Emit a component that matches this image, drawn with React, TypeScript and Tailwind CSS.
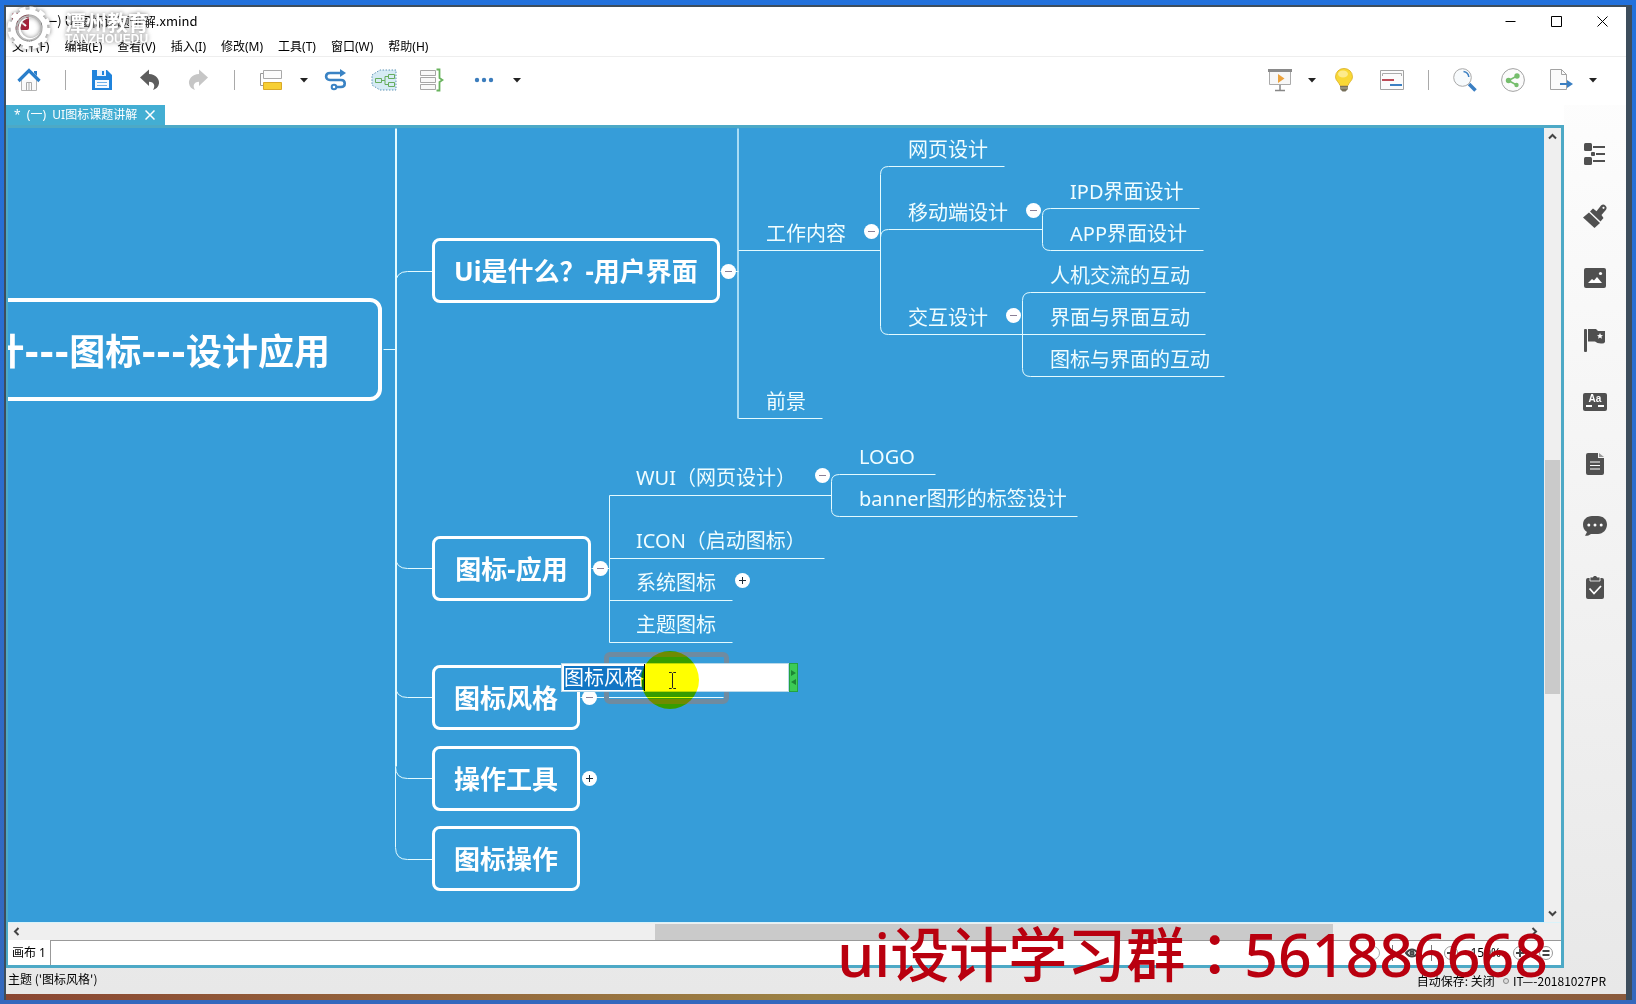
import { useEffect, useRef, type ReactNode } from 'react';

const menus = ['文件(F)', '编辑(E)', '查看(V)', '插入(I)', '修改(M)', '工具(T)', '窗口(W)', '帮助(H)'];

const mainTopics = [
  { text: 'Ui是什么？-用户界面', pos: 'left-[424px] top-[110px] w-72' },
  { text: '图标-应用', pos: 'left-[424px] top-[408px] w-[159px]' },
  { text: '图标风格', pos: 'left-[424px] top-[537px] w-37' },
  { text: '操作工具', pos: 'left-[424px] top-[618px] w-37' },
  { text: '图标操作', pos: 'left-[424px] top-[698px] w-37' },
];

const subTopics = [
  { text: '网页设计', pos: 'left-[900px] top-[8px]' },
  { text: '移动端设计', pos: 'left-[900px] top-[71px]' },
  { text: '工作内容', pos: 'left-[758px] top-[92px]' },
  { text: '前景', pos: 'left-[758px] top-[260px]' },
  { text: '交互设计', pos: 'left-[900px] top-[176px]' },
  { text: 'IPD界面设计', pos: 'left-[1062px] top-[50px]' },
  { text: 'APP界面设计', pos: 'left-[1062px] top-[92px]' },
  { text: '人机交流的互动', pos: 'left-[1042px] top-[134px]' },
  { text: '界面与界面互动', pos: 'left-[1042px] top-[176px]' },
  { text: '图标与界面的互动', pos: 'left-[1042px] top-[218px]' },
  { text: 'WUI（网页设计）', pos: 'left-[628px] top-[336px]' },
  { text: 'ICON（启动图标）', pos: 'left-[628px] top-[399px]' },
  { text: '系统图标', pos: 'left-[628px] top-[441px]' },
  { text: '主题图标', pos: 'left-[628px] top-[483px]' },
  { text: 'LOGO', pos: 'left-[851px] top-[315px]' },
  { text: 'banner图形的标签设计', pos: 'left-[851px] top-[357px]' },
];

const toggles = [
  { open: true, pos: 'left-[713px] top-[136px]' },
  { open: true, pos: 'left-[856px] top-[96px]' },
  { open: true, pos: 'left-[1018px] top-[75px]' },
  { open: true, pos: 'left-[998px] top-[180px]' },
  { open: true, pos: 'left-[585px] top-[433px]' },
  { open: true, pos: 'left-[807px] top-[340px]' },
  { open: false, pos: 'left-[727px] top-[445px]' },
  { open: true, pos: 'left-[574px] top-[562px]' },
  { open: false, pos: 'left-[574px] top-[643px]' },
];

function ToolButton({ label, wide, children }: { label: string; wide?: boolean; children: ReactNode }) {
  return (
    <button aria-label={label} className={`flex h-6 shrink-0 items-center justify-center ${wide ? 'w-8' : 'w-6'}`}>
      {children}
    </button>
  );
}

function Caret({ label }: { label: string }) {
  return (
    <button aria-label={label} className="flex h-6 w-2 items-center justify-center">
      <svg width="8" height="5" viewBox="0 0 8 5">
        <path d="M0 0h8L4 4.6z" fill="#222" />
      </svg>
    </button>
  );
}

function Separator() {
  return <div className="h-5 w-px bg-[#a9a9a9]" />;
}

function Toolbar() {
  return (
    <div className="flex h-12 items-center justify-between pr-[29px] pb-0.5 pl-[11px]">
      <div className="flex items-center gap-6">
        <ToolButton label="主页">
          <svg width="24" height="24" viewBox="0 0 24 24" fill="none">
            <path d="M4.500 12v10.500h15V12" fill="#fafafa" stroke="#b5b5b5" />
            <path d="M9.500 22.500v-8h5v8M12 14.500v8" stroke="#aaa" />
            <path d="M17 3h3v5l-3-3z" fill="#2b7fcb" />
            <path d="M1.500 13 12 2.500 22.500 13" stroke="#2b7fcb" strokeWidth="3.200" />
          </svg>
        </ToolButton>
        <Separator />
        <ToolButton label="保存">
          <svg width="22" height="22" viewBox="0 0 22 22">
            <path d="M1 1h15l5 5v15H1z" fill="#1f83dc" />
            <path d="M6 1h9v6H6z" fill="#eaf4fd" />
            <path d="M11 2h2v4h-2z" fill="#1f83dc" />
            <path d="M4 11h14v8H4z" fill="#f5faff" />
            <path d="M6 13.500h10M6 16.500h10" stroke="#6fb1ea" />
          </svg>
        </ToolButton>
        <ToolButton label="撤销">
          <svg width="20" height="22" viewBox="0 0 20 22">
            <path d="M0 8.500 9 .5v4.500c7 .5 10.500 5 10 9.500-.4 3.500-3 5.500-6 6.500 2.500-4 1.500-8-4-8.300V17z" fill="#5d5d5d" />
          </svg>
        </ToolButton>
        <ToolButton label="重做">
          <svg width="20" height="22" viewBox="0 0 20 22">
            <path d="m20 8.500-9-8V5C4 5.500.5 10 1 14.500c.4 3.500 3 5.500 6 6.500-2.500-4-1.500-8 4-8.300V17z" fill="#c6c6c6" />
          </svg>
        </ToolButton>
        <Separator />
        <div className="-mr-2 flex items-center gap-[17px]">
          <ToolButton label="主题">
            <svg width="24" height="24" viewBox="0 0 24 24" fill="none">
              <path d="M5 5.500H1.500v12H4" stroke="#999" />
              <path d="M4.500 2.500h18v8h-18z" fill="#fcfcfc" stroke="#a9a9a9" />
              <path d="M4.500 14.500h18v7h-18z" fill="#f7cf34" stroke="#d9a928" />
            </svg>
          </ToolButton>
          <Caret label="主题选项" />
        </div>
        <ToolButton label="联系">
          <svg width="24" height="24" viewBox="0 0 24 24" fill="none" stroke="#3a83c4">
            <path d="M17 5H6C.8 5 .8 12 6 12h11c5 0 5 7 0 7h-4" strokeWidth="2.600" />
            <path d="M16 1v8l6-4z" fill="#3a83c4" stroke="none" />
            <circle cx="10" cy="19" r="2.300" fill="#fff" strokeWidth="2" />
          </svg>
        </ToolButton>
        <ToolButton label="外框">
          <svg width="26" height="22" viewBox="0 0 26 22" fill="none" className="shrink-0">
            <path d="M1 6 9 1h16v20H9l-8-5z" fill="#d6ebf5" stroke="#5f94b5" strokeDasharray="1.500 1.500" />
            <path d="M4.500 9.500h6v4h-6zM17.500 5.500h6v4h-6zM17.500 13.500h6v4h-6zM10.500 11.500H14v-4h3.500M14 11.500v4h3.500" stroke="#67ad5d" />
          </svg>
        </ToolButton>
        <ToolButton label="概要">
          <svg width="24" height="24" viewBox="0 0 24 24" fill="none">
            <path d="M.5 2.500h15v5H.5zM.5 9.500h15v5H.5zM.5 16.500h15v5H.5z" fill="#f8f8f8" stroke="#a6a6a6" />
            <path d="M16.500 1.500h3V10l3 2-3 2v8.500h-3" stroke="#69b35e" strokeWidth="1.800" />
          </svg>
        </ToolButton>
        <div className="flex items-center gap-[13px]">
          <ToolButton label="更多" wide>
            <svg width="20" height="6" viewBox="0 0 20 6" fill="#3c7dbd">
              <circle cx="3" cy="3" r="2.200" />
              <circle cx="10" cy="3" r="2.200" />
              <circle cx="17" cy="3" r="2.200" />
            </svg>
          </ToolButton>
          <Caret label="更多选项" />
        </div>
      </div>

      <div className="flex items-center gap-6">
        <div className="-mr-2 flex items-center gap-4">
          <ToolButton label="演示">
            <svg width="24" height="24" viewBox="0 0 24 24" fill="none">
              <path d="M1.500 3h21v13.500h-21z" fill="#f7f7f7" stroke="#aaa" />
              <path d="M0 1h24v3H0z" fill="#8a8a8a" />
              <path d="M10 6v9l6.500-4.500z" fill="#eba23c" />
              <path d="M12 17v5M7 22.500h10" stroke="#888" strokeWidth="1.500" />
            </svg>
          </ToolButton>
          <Caret label="演示选项" />
        </div>
        <ToolButton label="头脑风暴">
          <svg width="20" height="24" viewBox="0 0 20 24">
            <path d="M10 .5a8.300 8.300 0 0 0-8.500 8.300c0 4 3.500 5.200 4.500 8.700h8c1-3.500 4.500-4.700 4.500-8.700A8.300 8.300 0 0 0 10 .5z" fill="#f9d835" stroke="#d9ad25" strokeWidth=".8" />
            <ellipse cx="9" cy="6" rx="5" ry="3.500" fill="#fdeb8b" />
            <path d="M6 18h8v3l-2.500 2.500h-3L6 21z" fill="#77705a" />
            <path d="M6 20h8" stroke="#c9c3ae" strokeWidth=".8" />
          </svg>
        </ToolButton>
        <ToolButton label="甘特图">
          <svg width="24" height="22" viewBox="0 0 24 22" fill="none">
            <path d="M.5 1.500h23v19H.5z" fill="#fbfbfb" stroke="#a2a2a2" />
            <path d="M2.500 7V4.500h19V7" stroke="#aaa" />
            <path d="M2 11h12" stroke="#bd4b57" strokeWidth="2" />
            <path d="M10 16h12" stroke="#3b7fc2" strokeWidth="2" />
          </svg>
        </ToolButton>
        <Separator />
        <ToolButton label="搜索">
          <svg width="24" height="24" viewBox="0 0 24 24" fill="none">
            <path d="m16 16 6.500 6.500" stroke="#3b7fc2" strokeWidth="3.500" />
            <circle cx="9.500" cy="9.500" r="8.800" fill="#f7fafc" stroke="#a9a9a9" />
            <path d="M10.500 3.500c3 .5 5 2.500 5.300 5.500" stroke="#3b7fc2" strokeWidth="1.500" />
          </svg>
        </ToolButton>
        <ToolButton label="分享">
          <svg width="24" height="24" viewBox="0 0 24 24" fill="none">
            <circle cx="12" cy="12" r="11.400" fill="#fbfbfb" stroke="#a3a3a3" />
            <path d="M16 8 7.500 12.500 15.500 17" stroke="#75bd6c" strokeWidth="1.600" />
            <circle cx="16" cy="8" r="2.700" fill="#75bd6c" />
            <circle cx="7.500" cy="12.500" r="2.700" fill="#75bd6c" />
            <circle cx="15.500" cy="17" r="2.200" fill="#75bd6c" />
          </svg>
        </ToolButton>
        <div className="flex items-center gap-4">
          <ToolButton label="导出">
            <svg width="24" height="24" viewBox="0 0 24 24" fill="none">
              <path d="M1.500 1.500h11l5 5v15h-16z" fill="#fbfbfb" stroke="#a3a3a3" />
              <path d="M12.500 1.500v5h5" stroke="#a3a3a3" />
              <path d="M11 16h8" stroke="#3b7fc2" strokeWidth="2" />
              <path d="M18 12v8l6-4z" fill="#3b7fc2" />
            </svg>
          </ToolButton>
          <Caret label="导出选项" />
        </div>
      </div>
    </div>
  );
}

function Sidebar() {
  return (
    <div className="flex flex-1 flex-col items-center gap-[38px] pt-[37px] text-[#505050]">
      <ToolButton label="大纲">
        <svg width="22" height="22" viewBox="0 0 22 22" fill="currentColor">
          <rect width="8" height="8" rx="1.500" />
          <rect y="14" width="8" height="8" rx="1.500" />
          <rect x="7" y="9" width="4" height="4" rx="1" />
          <path d="M9 3h12v2H9zM12 10h9v2h-9zM9 17h12v2H9z" />
        </svg>
      </ToolButton>
      <ToolButton label="格式">
        <svg width="24" height="24" viewBox="0 0 24 24" fill="currentColor">
          <path d="m0 13.500 6-5L17 19l-5.500 5z" />
          <path d="m7 7.500 3-3 3.500 2.700L18 1.500A3.300 3.300 0 0 1 23 5.700L18.500 11l2 3-3 3.500z" />
          <circle cx="20.500" cy="3.800" r="1.100" fill="#fbfbfb" />
        </svg>
      </ToolButton>
      <ToolButton label="图片">
        <svg width="22" height="20" viewBox="0 0 22 20">
          <rect width="22" height="20" rx="2" fill="currentColor" />
          <path d="m4 15 4-4 2 1.500L13 9l5 6z" fill="#fff" />
          <circle cx="16.500" cy="5.500" r="1.600" fill="#fff" />
        </svg>
      </ToolButton>
      <ToolButton label="图标">
        <svg width="22" height="24" viewBox="0 0 22 24" fill="currentColor">
          <rect x="0" y="1" width="3" height="23" rx="1" />
          <path d="M4 1h8l2 2h7v11q-1 2-4 1.500-4 0-6-2H4z" />
          <path d="m16 5 .9 2 2.100.2-1.600 1.400.5 2.100-1.900-1.100-1.900 1.100.5-2.100L13 7.200l2.100-.2z" fill="#fff" />
        </svg>
      </ToolButton>
      <ToolButton label="标签">
        <span className="flex h-[18px] w-6 shrink-0 flex-col items-center rounded-[2px] bg-[#505050] font-['Liberation_Sans'] text-[10px] leading-3 font-bold text-white">
          Aa
          <span className="w-[18px] border-t-2 border-dashed border-white" />
        </span>
      </ToolButton>
      <ToolButton label="备注">
        <svg width="20" height="22" viewBox="0 0 20 22">
          <path d="M3 0h10v5h6v15a2 2 0 0 1-2 2H3a2 2 0 0 1-2-2V2a2 2 0 0 1 2-2z" fill="currentColor" />
          <path d="M14 0v4h5z" fill="#999" />
          <path d="M5 9h10M5 12.500h10M5 16h10" stroke="#fff" strokeWidth="1.200" />
        </svg>
      </ToolButton>
      <ToolButton label="批注">
        <svg width="24" height="20" viewBox="0 0 24 20">
          <path d="M9 0h6c5 0 9 3.500 9 8.500S20 18 15 18H8c-2 1.500-4 2-6 1.800L4 16C1 14.500 0 11.500 0 8.500 0 3.500 4 0 9 0z" fill="currentColor" />
          <circle cx="5.800" cy="9" r="1.500" fill="#fff" />
          <circle cx="12" cy="9" r="1.500" fill="#fff" />
          <circle cx="18.200" cy="9" r="1.500" fill="#fff" />
        </svg>
      </ToolButton>
      <ToolButton label="任务信息">
        <svg width="20" height="24" viewBox="0 0 20 24">
          <rect x="1" y="2" width="18" height="21" rx="2" fill="currentColor" />
          <path d="M5 1h3a2 2 0 0 1 4 0h3v4H5z" fill="currentColor" stroke="#fff" strokeWidth=".8" />
          <path d="m4.500 12.500 4.500 5 7-7.500" fill="none" stroke="#fff" strokeWidth="1.800" />
        </svg>
      </ToolButton>
    </div>
  );
}

function Connectors() {
  return (
    <svg className="absolute inset-0 h-full w-full" fill="none" stroke="#e4fbff" strokeWidth="1">
      <g transform="translate(.5 .5)">
        {/* trunk */}
        <path d="M387.500 0V638" strokeWidth="2" />
        <path d="M387 638V719Q387 731 399 731H424M375 221H388" />
        <path d="M387 156Q387 143 399 143H424M387 428Q387 440 399 440H424M387 557Q387 569 399 569H424M387 638Q387 650 399 650H424" />
        <path d="M729.500 0V290" stroke="#a8dcf5" strokeWidth="2" />
        <path d="M712 143H730M730 122H872M730 290H814" />
        <path d="M996 38H880Q872 38 872 46V198Q872 206 880 206H1197M872 109Q872 101 880 101H1034" />
        <path d="M1191 80H1042Q1034 80 1034 87V115Q1034 122 1042 122H1195" />
        <path d="M1197 164H1022Q1014 164 1014 172V240Q1014 248 1022 248H1216" />
        <path d="M583 440H601M823 367H601V514H724M601 430H816M601 472H724" />
        <path d="M927 346H831Q823 346 823 353V381Q823 388 831 388H1069" />
        <path d="M572 569H715" />
      </g>
    </svg>
  );
}

function TopicEditor() {
  const ref = useRef<HTMLInputElement>(null);

  useEffect(() => {
    ref.current?.focus();
    ref.current?.select();
  }, []);

  return (
    <div className="absolute top-[535px] left-[553px] flex h-[29px]">
      <input
        ref={ref}
        aria-label="编辑主题"
        defaultValue="图标风格"
        className="w-57 border border-[#b9d9ea] bg-white pt-px pl-0.5 text-xl leading-6 text-black outline-none selection:bg-[#1175c4] selection:text-white"
      />
      <div className="flex w-[9px] flex-col items-center justify-center gap-1 border border-[#23a33f] bg-[#3ccb56]">
        <svg width="5" height="16" viewBox="0 0 5 16" fill="#1d8635">
          <path d="M0 0v6l5-3zM5 9v6l-5-3z" />
        </svg>
      </div>
      <span className="absolute top-px left-[83px] h-[27px] w-px bg-black" />
    </div>
  );
}

function Canvas() {
  return (
    <div className="relative min-w-0 flex-1 overflow-hidden bg-[#369dd9] text-[#f0fdff]">
      <Connectors />

      <div className="absolute top-[170px] left-[-500px] flex h-[103px] w-[874px] items-center justify-end rounded-xl border-4 border-white pt-1.5 pr-12 font-['DejaVu_Sans','Noto_Sans_CJK_SC',sans-serif] text-4xl font-bold whitespace-nowrap text-white">
        计---图标---设计应用
      </div>

      {mainTopics.map((topic) => (
        <div
          key={topic.text}
          className={`absolute flex h-[65px] items-center justify-center rounded-lg border-3 border-white pt-0.5 text-[26px] font-bold whitespace-nowrap text-white ${topic.pos}`}
        >
          {topic.text}
        </div>
      ))}

      {subTopics.map((topic) => (
        <div key={topic.text} className={`absolute text-xl leading-7 whitespace-nowrap ${topic.pos}`}>
          {topic.text}
        </div>
      ))}

      {toggles.map((toggle) => (
        <button
          key={toggle.pos}
          aria-label={toggle.open ? '收起' : '展开'}
          className={`absolute flex size-[15px] items-center justify-center rounded-full bg-white ${toggle.pos}`}
        >
          <svg width="9" height="9" viewBox="0 0 9 9" stroke={toggle.open ? '#8b7f96' : '#1c2c3a'}>
            <path d={toggle.open ? 'M1 4.500h7' : 'M1 4.500h7M4.500 1v7'} />
          </svg>
        </button>
      ))}

      {/* selected topic and its editor */}
      <div className="absolute top-[524px] left-[596px] h-[52px] w-[125px] rounded-md border-5 border-[#6f8ba0]" />
      <TopicEditor />
      <div className="absolute top-[523px] left-[633px] size-[58px] rounded-full bg-[#ffff00] mix-blend-multiply" />
      <svg className="absolute top-[544px] left-[660px]" width="9" height="17" viewBox="0 0 9 17" fill="none" stroke="#222">
        <path d="M1 .5h2.500l1 1 1-1H8M4.500 1.500v14M1 16.500h2.500l1-1 1 1H8" />
      </svg>
    </div>
  );
}

function Chevron({ d }: { d: string }) {
  return (
    <svg width="9" height="9" viewBox="0 0 9 9" fill="none" stroke="#444" strokeWidth="2">
      <path d={d} />
    </svg>
  );
}

function SheetBar() {
  return (
    <div className="flex h-[25px] bg-white text-xs text-black">
      <button className="w-[43px] border-r border-[#999] bg-white">画布 1</button>
      <div className="flex flex-1 items-center justify-end gap-3 border-t border-[#999] pr-2">
        <span className="size-3.5 rounded-full border border-[#aaa]" />
        <span className="h-4 w-px bg-[#777]" />
        <button aria-label="筛选">
          <svg width="14" height="14" viewBox="0 0 14 14" fill="none" stroke="#444" strokeWidth="2">
            <path d="M1 7q6-7 12 0-6 7-12 0z" />
            <circle cx="7" cy="7" r="1.500" />
          </svg>
        </button>
        <span className="h-4 w-px bg-[#777]" />
        <button aria-label="缩小" className="flex size-3.5 items-center justify-center rounded-full border border-[#999]">
          <span className="h-0.5 w-2 bg-[#444]" />
        </button>
        <button>150%</button>
        <button aria-label="放大">
          <svg width="14" height="14" viewBox="0 0 14 14" fill="none" stroke="#999">
            <circle cx="7" cy="7" r="6.500" />
            <path d="M3 7h8M7 3v8" stroke="#444" strokeWidth="2" />
          </svg>
        </button>
        <button aria-label="实际大小">
          <svg width="14" height="14" viewBox="0 0 14 14" fill="none" stroke="#999">
            <circle cx="7" cy="7" r="6.500" />
            <path d="M3.500 5h7M3.500 9h7" stroke="#444" strokeWidth="1.800" />
          </svg>
        </button>
      </div>
    </div>
  );
}

function Watermarks() {
  return (
    <>
      <div className="pointer-events-none absolute top-1.5 left-[7px] flex items-center gap-3.5 drop-shadow-[0_0_2px_rgba(90,90,90,0.8)]">
        <svg width="44" height="44" viewBox="0 0 44 44" fill="none" stroke="#fff">
          <circle cx="22" cy="22" r="19.500" strokeWidth="4" strokeDasharray="6.200 4" />
          <circle cx="22" cy="22" r="16" strokeWidth="5" />
          <circle cx="22" cy="22" r="12" strokeWidth="1.500" stroke="#bbb" />
          <path d="M28 13a11 11 0 1 0 5 12 10 10 0 1 1-5-12z" fill="#fff" stroke="none" />
        </svg>
        <div className="flex flex-col font-bold text-white">
          <span className="text-[21px] leading-[22px]">潭州教育</span>
          <span className="font-['Liberation_Sans'] text-xs leading-3">TANZHOUEDU</span>
        </div>
      </div>
      <div className="pointer-events-none absolute right-[88px] bottom-2 text-[59px] leading-[84px] font-medium whitespace-nowrap text-[#b9000f]">
        ui设计学习群<span className="font-['Noto_Sans_CJK_TC']">：</span>561886668
      </div>
    </>
  );
}

export default function App() {
  return (
    <div className="relative flex h-screen flex-col overflow-hidden bg-linear-to-b from-[#2271dc] to-[#3468bd] pt-[5px] pr-1 pb-1 pl-1 font-['Noto_Sans','Noto_Sans_CJK_SC',sans-serif]">
      <div className="flex min-h-0 flex-1 flex-col bg-[#3d4d5c] pt-0.5 pr-1.5 pl-0.5">
        <div className="flex min-h-0 flex-1 flex-col bg-linear-to-b from-white to-[#e8e8e8]">
          <header className="bg-white">
            <div className="flex h-7 items-center justify-between text-[13px] text-black">
              <div className="flex items-center gap-2 pl-1.5">
                <svg width="17" height="17" viewBox="0 0 17 17">
                  <rect width="17" height="17" rx="2" fill="#a81f38" />
                  <path d="m3 4 11 9M14 4 3 13" stroke="#fff" strokeWidth="2" />
                </svg>
                <span className="font-['Noto_Sans_CJK_SC'] whitespace-pre">{' (一) UI图标课题讲解.xmind'}</span>
              </div>
              <div className="flex items-center gap-[35px] pr-[18px]">
                <button aria-label="最小化">
                  <svg width="11" height="11" viewBox="0 0 11 11" stroke="#000">
                    <path d="M.5 5.500h10" />
                  </svg>
                </button>
                <button aria-label="最大化">
                  <svg width="11" height="11" viewBox="0 0 11 11" fill="none" stroke="#000">
                    <path d="M.5 .5h10v10H.5z" />
                  </svg>
                </button>
                <button aria-label="关闭">
                  <svg width="11" height="11" viewBox="0 0 11 11" stroke="#000">
                    <path d="m.5 .5 10 10M10.500 .5l-10 10" />
                  </svg>
                </button>
              </div>
            </div>
            <nav className="flex h-[22px] items-center gap-[15px] border-b border-[#eee] pt-0.5 pl-1.5 text-xs text-black">
              {menus.map((menu) => (
                <button key={menu}>{menu}</button>
              ))}
            </nav>
            <Toolbar />
          </header>

          <div className="flex min-h-0 flex-1">
            <main className="flex w-[calc(100%-62px)] flex-col">
              <div className="flex bg-white">
                <div className="flex h-5 items-center gap-2 bg-[#43aed3] pr-2.5 pl-2 text-xs text-white">
                  <span className="whitespace-pre">*  (一)  UI图标课题讲解</span>
                  <button aria-label="关闭标签">
                    <svg width="10" height="10" viewBox="0 0 10 10" stroke="#fff" strokeWidth="1.500">
                      <path d="m.5 .5 9 9M9.500 .5l-9 9" />
                    </svg>
                  </button>
                </div>
              </div>
              <div className="flex min-h-0 flex-1 flex-col border-3 border-l-2 border-[#4da9c6] bg-[#efefef]">
                <div className="flex min-h-0 flex-1">
                  <Canvas />
                  <div className="flex w-[17px] flex-col items-center bg-[#efefef] py-1">
                    <Chevron d="M1 6.500 4.500 3 8 6.500" />
                    <div className="flex-[319]" />
                    <div className="w-[15px] flex-[234] bg-[#cacaca]" />
                    <div className="flex-[215]" />
                    <Chevron d="M1 2.500 4.500 6 8 2.500" />
                  </div>
                </div>
                <div className="flex h-[18px] items-center border-t border-[#d9f3fa] bg-[#efefef] pr-[22px] pl-1">
                  <Chevron d="M6.500 1 3 4.500 6.500 8" />
                  <div className="flex-[634]" />
                  <div className="h-4 flex-[679] bg-[#cacaca]" />
                  <div className="flex-[197]" />
                  <Chevron d="M2.500 1 6 4.500 2.500 8" />
                </div>
                <SheetBar />
              </div>
            </main>
            <Sidebar />
          </div>

          <footer className="flex h-[26px] items-center justify-between pr-5 pl-0.5 font-['Noto_Sans_CJK_SC'] text-xs text-black">
            <span className="pb-1">主题 ('图标风格')</span>
            <div className="flex items-center gap-1">
              <span className="mr-1">自动保存: 关闭</span>
              <span className="size-1.5 rounded-full border border-[#888] bg-[#ddd]" />
              <span>IT—-20181027PR</span>
            </div>
          </footer>
        </div>
        {/* desktop wallpaper edge */}
        <div className="h-1.5 bg-linear-to-r from-[#8a4632] via-[#9c8345] to-[#8a5a3c]" />
      </div>
      <Watermarks />
    </div>
  );
}
